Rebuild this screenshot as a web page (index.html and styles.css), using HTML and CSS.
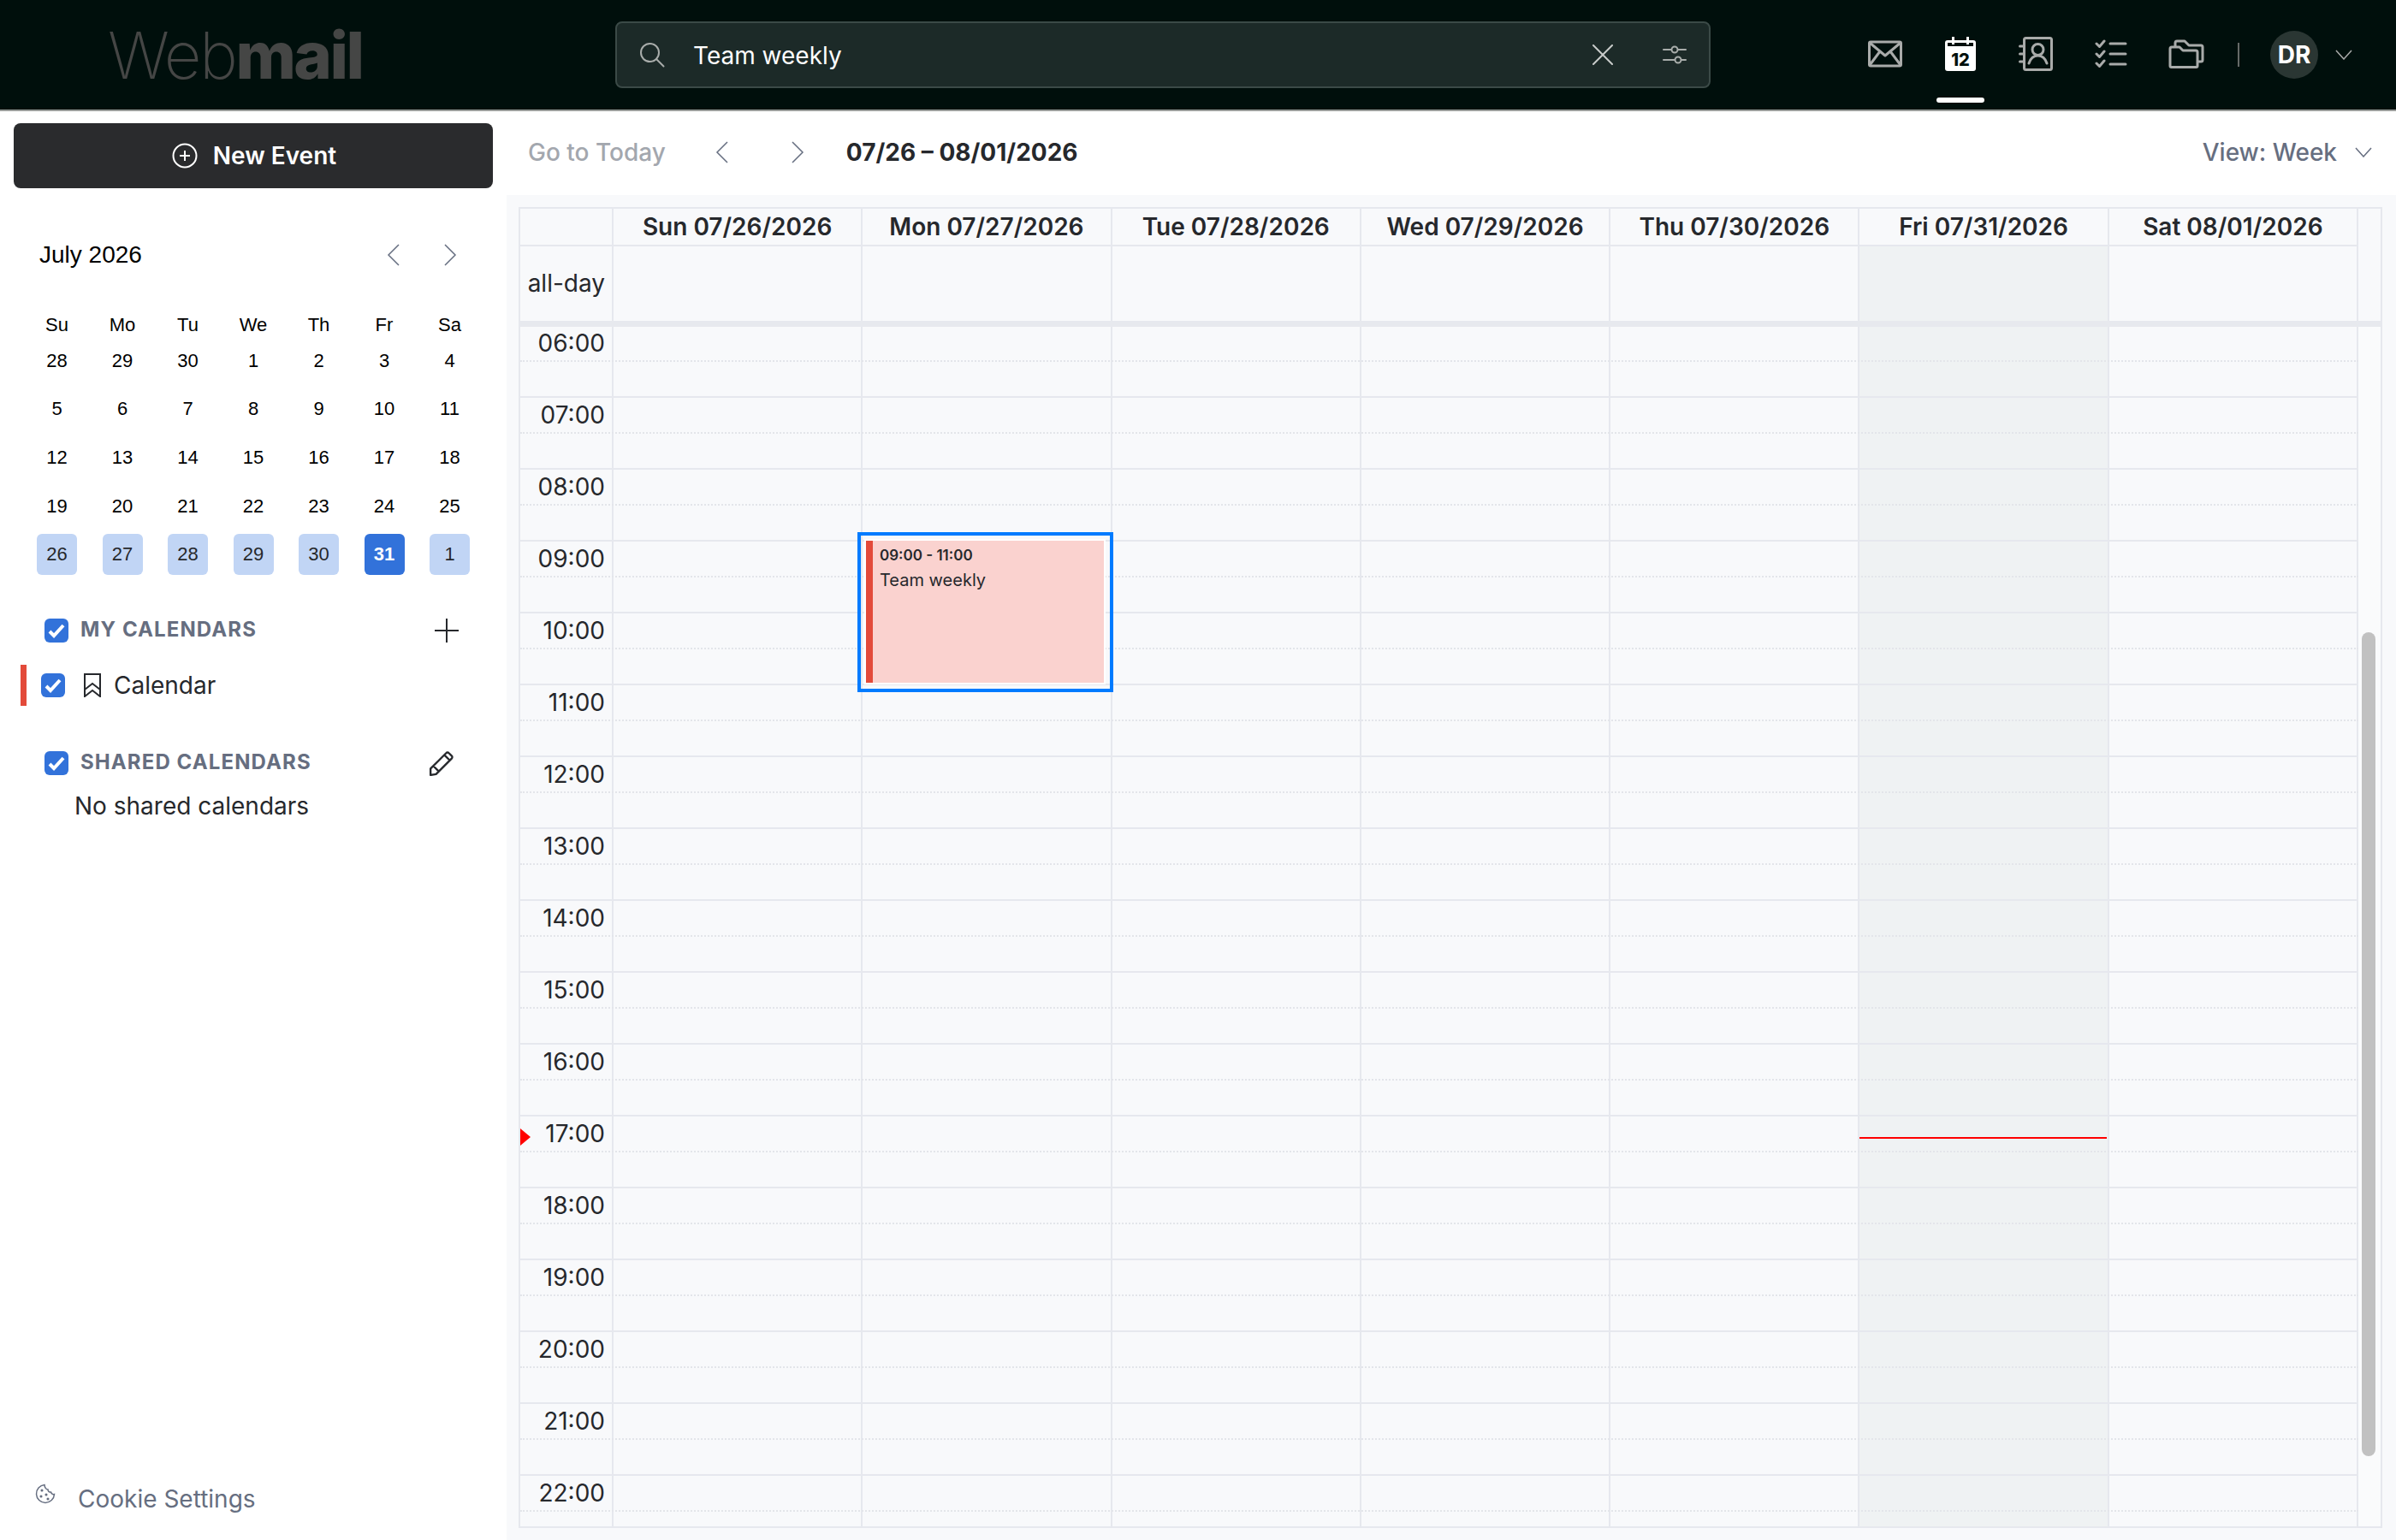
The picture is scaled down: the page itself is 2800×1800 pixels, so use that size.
FILE: index.html
```html
<!DOCTYPE html>
<html lang="en">
<head>
    <meta charset="UTF-8">
    <title>Webmail - Calendar</title>
    <link rel="stylesheet" href="styles.css">
</head>
<body>
    <header class="topbar">
        <div class="logo"><span class="logo-thin">Web</span><span class="logo-bold">mail</span></div>
        <div class="search">
            <svg class="search-icon" width="30" height="30" viewBox="0 0 30 30" fill="none" stroke="#a9adab" stroke-width="2"><circle cx="12.5" cy="12.5" r="10.5"/><path d="M20 20l8.500 8.500" stroke-linecap="round"/></svg>
            <span class="search-text">Team weekly</span>
            <svg class="search-clear" width="26" height="24" viewBox="0 0 26 24" fill="none" stroke="#c8cbca" stroke-width="2" stroke-linecap="round"><path d="M2 1l22 22M24 1L2 23"/></svg>
            <svg class="search-filter" width="28" height="24" viewBox="0 0 28 24" fill="none" stroke="#a9adab" stroke-width="2" stroke-linecap="round"><path d="M1 6h9M18 6h9M1 18h13M22 18h5"/><circle cx="14" cy="6" r="3.500"/><circle cx="18" cy="18" r="3.500"/></svg>
        </div>
        <nav class="nav">
            <a class="nav-item">
                <svg width="40" height="32" viewBox="0 0 40 32" fill="none" stroke="#a9abaa" stroke-width="3" stroke-linejoin="round"><rect x="1.500" y="2" width="37" height="28" rx="1.500"/><path d="M2 3l18 15L38 3M2 29l12-16M38 29L26 13"/></svg>
            </a>
            <a class="nav-item nav-item-active">
                <svg width="36" height="40" viewBox="0 0 36 40"><path d="M3 4h30a3 3 0 0 1 3 3v30a3 3 0 0 1-3 3H3a3 3 0 0 1-3-3V7a3 3 0 0 1 3-3z" fill="#fff"/><rect x="3" y="7" width="30" height="4" fill="#000f0c"/><rect x="8" y="0" width="3" height="9" fill="#fff"/><rect x="25" y="0" width="3" height="9" fill="#fff"/><text x="18" y="34" class="cal-day">12</text></svg>
            </a>
            <a class="nav-item">
                <svg width="40" height="40" viewBox="0 0 40 40" fill="none" stroke="#a9abaa" stroke-width="3" stroke-linecap="round" stroke-linejoin="round"><rect x="6.500" y="1.500" width="32" height="37" rx="2"/><path d="M1.500 11h5M1.500 20h5M1.500 29h5"/><circle cx="22.500" cy="15" r="6.500"/><path d="M12 31c2-6 6-9 10.500-9S31 25 33 31"/></svg>
            </a>
            <a class="nav-item">
                <svg width="38" height="34" viewBox="0 0 38 34" fill="none" stroke="#a9abaa" stroke-width="3" stroke-linecap="round" stroke-linejoin="round"><path d="M2 5l3.500 3.500L11 2M2 17l3.500 3.500L11 14M2 28l3.500 3.500L11 25"/><path d="M18 5h18M18 17h18M18 29h18"/></svg>
            </a>
            <a class="nav-item">
                <svg width="42" height="34" viewBox="0 0 42 34" fill="none" stroke="#a9abaa" stroke-width="3" stroke-linejoin="round"><path d="M8 9V4a2 2 0 0 1 2-2h9l5 5h14a2 2 0 0 1 2 2v15a2 2 0 0 1-2 2h-4"/><path d="M2 11a2 2 0 0 1 2-2h9l4 4h15a2 2 0 0 1 2 2v16a1.500 1.500 0 0 1-1.500 1.500h-29A1.500 1.500 0 0 1 2 31z"/></svg>
            </a>
        </nav>
        <span class="nav-sep"></span>
        <div class="avatar">DR</div>
        <svg class="user-caret" width="20" height="12" viewBox="0 0 20 12" fill="none" stroke="#a9abaa" stroke-width="1.500"><path d="M1 1l9 10 9-10"/></svg>
    </header>

    <div class="app">
        <aside class="sidebar">
            <button class="new-event">
                <svg width="30" height="30" viewBox="0 0 30 30" fill="none" stroke="#fff" stroke-width="2"><circle cx="15" cy="15" r="13.500"/><path d="M15 9v12M9 15h12"/></svg>
                New Event
            </button>

            <div class="month-head">
                <span class="month-title">July 2026</span>
                <svg class="chev" width="16" height="26" viewBox="0 0 16 26" fill="none" stroke="#666e80" stroke-width="1.500"><path d="M14 1L2 13l12 12"/></svg>
                <svg class="chev" width="16" height="26" viewBox="0 0 16 26" fill="none" stroke="#666e80" stroke-width="1.500"><path d="M2 1l12 12L2 25"/></svg>
            </div>

            <div class="month-grid">
                <span class="dow">Su</span><span class="dow">Mo</span><span class="dow">Tu</span><span class="dow">We</span><span class="dow">Th</span><span class="dow">Fr</span><span class="dow">Sa</span>
                <span class="date">28</span><span class="date">29</span><span class="date">30</span><span class="date">1</span><span class="date">2</span><span class="date">3</span><span class="date">4</span>
                <span class="date">5</span><span class="date">6</span><span class="date">7</span><span class="date">8</span><span class="date">9</span><span class="date">10</span><span class="date">11</span>
                <span class="date">12</span><span class="date">13</span><span class="date">14</span><span class="date">15</span><span class="date">16</span><span class="date">17</span><span class="date">18</span>
                <span class="date">19</span><span class="date">20</span><span class="date">21</span><span class="date">22</span><span class="date">23</span><span class="date">24</span><span class="date">25</span>
                <span class="date in-week">26</span><span class="date in-week">27</span><span class="date in-week">28</span><span class="date in-week">29</span><span class="date in-week">30</span><span class="date today-date">31</span><span class="date in-week">1</span>
            </div>

            <div class="cal-section my-section">
                <span class="check"><svg width="20" height="18" viewBox="0 0 20 18" fill="none" stroke="#fff" stroke-width="4"><path d="M2 10l5 5L18 3"/></svg></span>
                <span class="section-title">MY CALENDARS</span>
                <svg class="section-action" width="28" height="28" viewBox="0 0 28 28" fill="none" stroke="#26282c" stroke-width="2"><path d="M14 0v28M0 14h28"/></svg>
            </div>
            <div class="cal-row">
                <span class="cal-color"></span>
                <span class="check"><svg width="20" height="18" viewBox="0 0 20 18" fill="none" stroke="#fff" stroke-width="4"><path d="M2 10l5 5L18 3"/></svg></span>
                <svg class="bookmark" width="20" height="28" viewBox="0 0 20 28" fill="none" stroke="#26282c" stroke-width="2"><path d="M1 1h18v26l-9-7-9 7zM1 19l9-7 9 7"/></svg>
                <span>Calendar</span>
            </div>

            <div class="cal-section shared-section">
                <span class="check"><svg width="20" height="18" viewBox="0 0 20 18" fill="none" stroke="#fff" stroke-width="4"><path d="M2 10l5 5L18 3"/></svg></span>
                <span class="section-title">SHARED CALENDARS</span>
                <svg class="section-action pencil" width="30" height="30" viewBox="0 0 28 28" fill="none" stroke="#26282c" stroke-width="2.200" stroke-linejoin="round"><path d="M2 20L19 3a2 2 0 0 1 3 0l3 3a2 2 0 0 1 0 3L8 26l-6 1zM17 5l6 6M5 17l6 6"/></svg>
            </div>
            <div class="no-shared">No shared calendars</div>

            <a class="cookie">
                <svg width="24" height="24" viewBox="0 0 24 24" fill="none" stroke="#666e80" stroke-width="1.500"><path d="M11 1.500a10.500 10.500 0 1 0 11.500 11c-2 .5-3.500-.5-4-2.500-2 .3-3.500-1-3.500-3-2 0-4-2.500-4-5.500z"/><circle cx="8" cy="8" r=".8"/><circle cx="7" cy="15" r=".8"/><circle cx="13" cy="13" r=".8"/><circle cx="15" cy="18" r=".8"/></svg>
                <span>Cookie Settings</span>
            </a>
        </aside>

        <main class="main">
            <div class="toolbar">
                <span class="go-today">Go to Today</span>
                <svg class="chev prev-week" width="16" height="26" viewBox="0 0 16 26" fill="none" stroke="#666e80" stroke-width="1.500"><path d="M14 1L2 13l12 12"/></svg>
                <svg class="chev next-week" width="16" height="26" viewBox="0 0 16 26" fill="none" stroke="#666e80" stroke-width="1.500"><path d="M2 1l12 12L2 25"/></svg>
                <span class="range">07/26 – 08/01/2026</span>
                <span class="view-select">View: Week</span>
                <svg class="view-caret" width="20" height="12" viewBox="0 0 20 12" fill="none" stroke="#666e80" stroke-width="1.500"><path d="M1 1l9 10 9-10"/></svg>
            </div>

            <div class="week">
                <div class="week-row week-head">
                    <div class="corner"></div>
                    <div class="day-name">Sun 07/26/2026</div>
                    <div class="day-name">Mon 07/27/2026</div>
                    <div class="day-name">Tue 07/28/2026</div>
                    <div class="day-name">Wed 07/29/2026</div>
                    <div class="day-name">Thu 07/30/2026</div>
                    <div class="day-name">Fri 07/31/2026</div>
                    <div class="day-name">Sat 08/01/2026</div>
                </div>
                <div class="week-row all-day">
                    <div class="corner all-day-label">all-day</div>
                    <div class="all-day-cell"></div>
                    <div class="all-day-cell"></div>
                    <div class="all-day-cell"></div>
                    <div class="all-day-cell"></div>
                    <div class="all-day-cell"></div>
                    <div class="all-day-cell today-col"></div>
                    <div class="all-day-cell"></div>
                </div>
                <div class="week-body">
                    <div class="hours">
                        <div class="columns">
                            <div class="corner"></div>
                            <div class="col"></div>
                            <div class="col"></div>
                            <div class="col"></div>
                            <div class="col"></div>
                            <div class="col"></div>
                            <div class="col today-col"></div>
                            <div class="col"></div>
                        </div>
                        <div class="hour"><div class="hour-label">06:00</div><div class="half"></div></div>
                        <div class="hour"><div class="hour-label">07:00</div><div class="half"></div></div>
                        <div class="hour"><div class="hour-label">08:00</div><div class="half"></div></div>
                        <div class="hour"><div class="hour-label">09:00</div><div class="half"></div></div>
                        <div class="hour"><div class="hour-label">10:00</div><div class="half"></div></div>
                        <div class="hour"><div class="hour-label">11:00</div><div class="half"></div></div>
                        <div class="hour"><div class="hour-label">12:00</div><div class="half"></div></div>
                        <div class="hour"><div class="hour-label">13:00</div><div class="half"></div></div>
                        <div class="hour"><div class="hour-label">14:00</div><div class="half"></div></div>
                        <div class="hour"><div class="hour-label">15:00</div><div class="half"></div></div>
                        <div class="hour"><div class="hour-label">16:00</div><div class="half"></div></div>
                        <div class="hour"><div class="hour-label">17:00</div><div class="half"></div></div>
                        <div class="hour"><div class="hour-label">18:00</div><div class="half"></div></div>
                        <div class="hour"><div class="hour-label">19:00</div><div class="half"></div></div>
                        <div class="hour"><div class="hour-label">20:00</div><div class="half"></div></div>
                        <div class="hour"><div class="hour-label">21:00</div><div class="half"></div></div>
                        <div class="hour"><div class="hour-label">22:00</div><div class="half"></div></div>

                        <div class="event-focus">
                            <div class="event">
                                <div class="event-bar"></div>
                                <div class="event-body">
                                    <div class="event-time">09:00 - 11:00</div>
                                    <div class="event-title">Team weekly</div>
                                </div>
                            </div>
                        </div>
                        <div class="now-arrow"></div>
                        <div class="now-line"></div>
                    </div>
                    <div class="scroll-track"><div class="scroll-thumb"></div></div>
                </div>
            </div>
        </main>
    </div>
</body>
</html>
```

FILE: styles.css
```css
* {
    box-sizing: border-box;
}
body, html {
    margin: 0;
    padding: 0;
    width: 2800px;
    height: 1800px;
    overflow: hidden;
    background: #fff;
    font-family: 'Inter', 'Liberation Sans', sans-serif;
    font-size: 28px;
    color: #26282c;
}

/* top bar */
.topbar {
    height: 130px;
    display: flex;
    align-items: center;
    background: #000f0c;
    border-bottom: 2px solid #999c9a;
}
.logo {
    width: 719px;
    padding-left: 126px;
    font-size: 76px;
    line-height: 1;
    color: #454645;
    letter-spacing: -2.500px;
}
.logo-thin {
    font-weight: 200;
}
.logo-bold {
    font-weight: 800;
}
.search {
    width: 1280px;
    height: 78px;
    display: flex;
    align-items: center;
    padding: 0 26px;
    background: #1c2a28;
    border: 2px solid #3b4a47;
    border-radius: 8px;
    color: #fff;
}
.search-text {
    flex: 1;
    margin-left: 33px;
    padding-top: 1px;
}
.search-clear {
    margin-right: 57px;
}
.nav {
    display: flex;
    gap: 32px;
    margin-left: 176px;
}
.nav-item {
    width: 56px;
    height: 128px;
    padding-bottom: 2px;
    display: flex;
    align-items: center;
    justify-content: center;
    position: relative;
}
.nav-item-active::after {
    content: "";
    position: absolute;
    left: 0;
    right: 0;
    top: 114px;
    height: 6px;
    border-radius: 3px;
    background: #fff;
}
.cal-day {
    font-size: 20px;
    font-weight: 800;
    text-anchor: middle;
    fill: #000f0c;
}
.nav-sep {
    width: 2px;
    height: 28px;
    margin: 0 36px 0 32px;
    background: #666a68;
}
.avatar {
    width: 56px;
    height: 56px;
    border-radius: 50%;
    background: #2a3633;
    color: #fff;
    font-weight: 700;
    line-height: 56px;
    text-align: center;
}
.user-caret {
    margin-left: 20px;
}

/* layout */
.app {
    display: flex;
    height: 1670px;
}
.sidebar {
    width: 592px;
    height: 100%;
    padding: 14px 16px 0 16px;
    display: flex;
    flex-direction: column;
}
.main {
    flex: 1;
    background: #f8f9fb;
}

/* sidebar */
.new-event {
    width: 560px;
    height: 76px;
    display: flex;
    align-items: center;
    justify-content: center;
    gap: 18px;
    padding-left: 8px;
    border: none;
    border-radius: 8px;
    background: #2a2b2d;
    color: #fff;
    font-family: inherit;
    font-size: 28px;
    font-weight: 600;
}
.month-head {
    display: flex;
    align-items: center;
    margin-top: 62px;
    padding: 0 0 0 30px;
    font-family: 'Liberation Sans', sans-serif;
    height: 32px;
}
.month-title {
    flex: 1;
    color: #000;
}
.month-head .chev {
    margin-right: 50px;
}
.month-head .chev:last-child {
    margin-right: 42px;
}
.month-grid {
    display: grid;
    grid-template-columns: repeat(7, 47px);
    grid-template-rows: 18px;
    column-gap: 29.500px;
    grid-auto-rows: 48px;
    row-gap: 8.700px;
    margin: 57px 0 0 27px;
    font-family: 'Liberation Sans', sans-serif;
    font-size: 22px;
    color: #000;
}
.dow, .date {
    display: flex;
    align-items: center;
    justify-content: center;
    border-radius: 6px;
}
.in-week {
    background: #c1d5f5;
    color: #26282c;
}
.today-date {
    background: #3272da;
    color: #fff;
    font-weight: 700;
}
.cal-section {
    display: flex;
    align-items: center;
}
.my-section {
    margin: 51px 0 0 36px;
}
.shared-section {
    margin: 52px 0 0 36px;
}
.check {
    width: 28px;
    height: 28px;
    display: flex;
    align-items: center;
    justify-content: center;
    flex: none;
    border-radius: 6px;
    background: #3272da;
}
.section-title {
    flex: 1;
    margin: -4px 0 0 14px;
    font-size: 24px;
    font-weight: 700;
    letter-spacing: 1.100px;
    color: #666e80;
}
.section-action {
    margin-right: 40px;
}
.pencil {
    margin-right: 45px;
}
.cal-row {
    display: flex;
    align-items: center;
    height: 48px;
    margin: 26px 0 0 8px;
}
.cal-color {
    width: 7px;
    height: 48px;
    margin-right: 17px;
    background: #e34a3a;
}
.bookmark {
    margin: 0 15px 0 22px;
}
.no-shared {
    margin: 18px 0 0 71px;
}
.cookie {
    display: flex;
    align-items: center;
    gap: 26px;
    margin: auto 0 31px 25px;
    color: #666e80;
}
.cookie svg {
    margin-top: -12px;
}

/* toolbar */
.main .toolbar {
    height: 98px;
    padding-bottom: 2px;
    display: flex;
    align-items: center;
    padding-left: 25px;
    padding-right: 28px;
    background: #fff;
}
.go-today {
    color: #a3a7ae;
    font-weight: 500;
}
.prev-week {
    margin-left: 58px;
}
.next-week {
    margin-left: 72px;
}
.range {
    flex: 1;
    margin-left: 49px;
    font-weight: 700;
}
.view-select {
    color: #666e80;
    font-weight: 500;
}
.view-caret {
    margin-left: 21px;
}

/* week grid */
.week {
    height: 1544px;
    margin: 14px 16px 0 14px;
    display: flex;
    flex-direction: column;
    border: 2px solid #e6e8ee;
}
.week-row {
    display: grid;
    grid-template-columns: 109px repeat(7, 1fr);
    margin-right: 26px;
}
.corner {
    border-right: 2px solid #e6e8ee;
}
.week-head {
    height: 44px;
    border-bottom: 2px solid #e6e8ee;
}
.day-name {
    border-right: 2px solid #e6e8ee;
    font-weight: 600;
    line-height: 42px;
    text-align: center;
}
.all-day {
    height: 87px;
}
.all-day-label {
    padding-right: 8px;
    line-height: 86px;
    text-align: right;
}
.all-day-cell {
    border-right: 2px solid #e6e8ee;
}
.today-col {
    background: #eff2f3;
}
.week-body {
    flex: 1;
    min-height: 0;
    display: flex;
    border-top: 7px solid #e7e9ee;
}
.hours {
    flex: 1;
    position: relative;
    overflow: hidden;
}
.columns {
    position: absolute;
    top: 0;
    bottom: 0;
    left: 0;
    right: 0;
    display: grid;
    grid-template-columns: 109px repeat(7, 1fr);
}
.col {
    border-right: 2px solid #e6e8ee;
}
.hour {
    height: 84px;
    position: relative;
    border-top: 2px solid #e6e8ee;
}
.hour:nth-child(2) {
    margin-top: -3px;
}
.hour-label {
    width: 99px;
    height: 40px;
    line-height: 40px;
    text-align: right;
}
.half {
    border-top: 2px dotted #e3e5ea;
}
.event-focus {
    position: absolute;
    left: 394px;
    top: 240px;
    width: 299px;
    height: 187px;
    padding: 4px 5px 5px 4px;
    border: 4px solid #007bff;
}
.event {
    height: 100%;
    display: flex;
    border: 2px solid #fff;
    background: #fad2cf;
    line-height: 1;
}
.event-bar {
    width: 8px;
    background: #e34a3a;
}
.event-body {
    flex: 1;
    padding-left: 8px;
}
.event-time {
    margin-top: 9px;
    font-size: 17px;
    font-weight: 600;
}
.event-title {
    margin-top: 10px;
    font-size: 20px;
}
.now-arrow {
    position: absolute;
    left: 0;
    top: 937px;
    border-left: 12px solid #f00;
    border-top: 10px solid transparent;
    border-bottom: 10px solid transparent;
}
.now-line {
    position: absolute;
    left: 1565px;
    top: 947px;
    width: 289px;
    height: 2px;
    background: #f00;
}
.scroll-track {
    width: 26px;
    padding: 357px 4px 0;
    background: #fafbfc;
}
.scroll-thumb {
    width: 16px;
    height: 963px;
    border-radius: 8px;
    background: #c1c1c1;
}
```
